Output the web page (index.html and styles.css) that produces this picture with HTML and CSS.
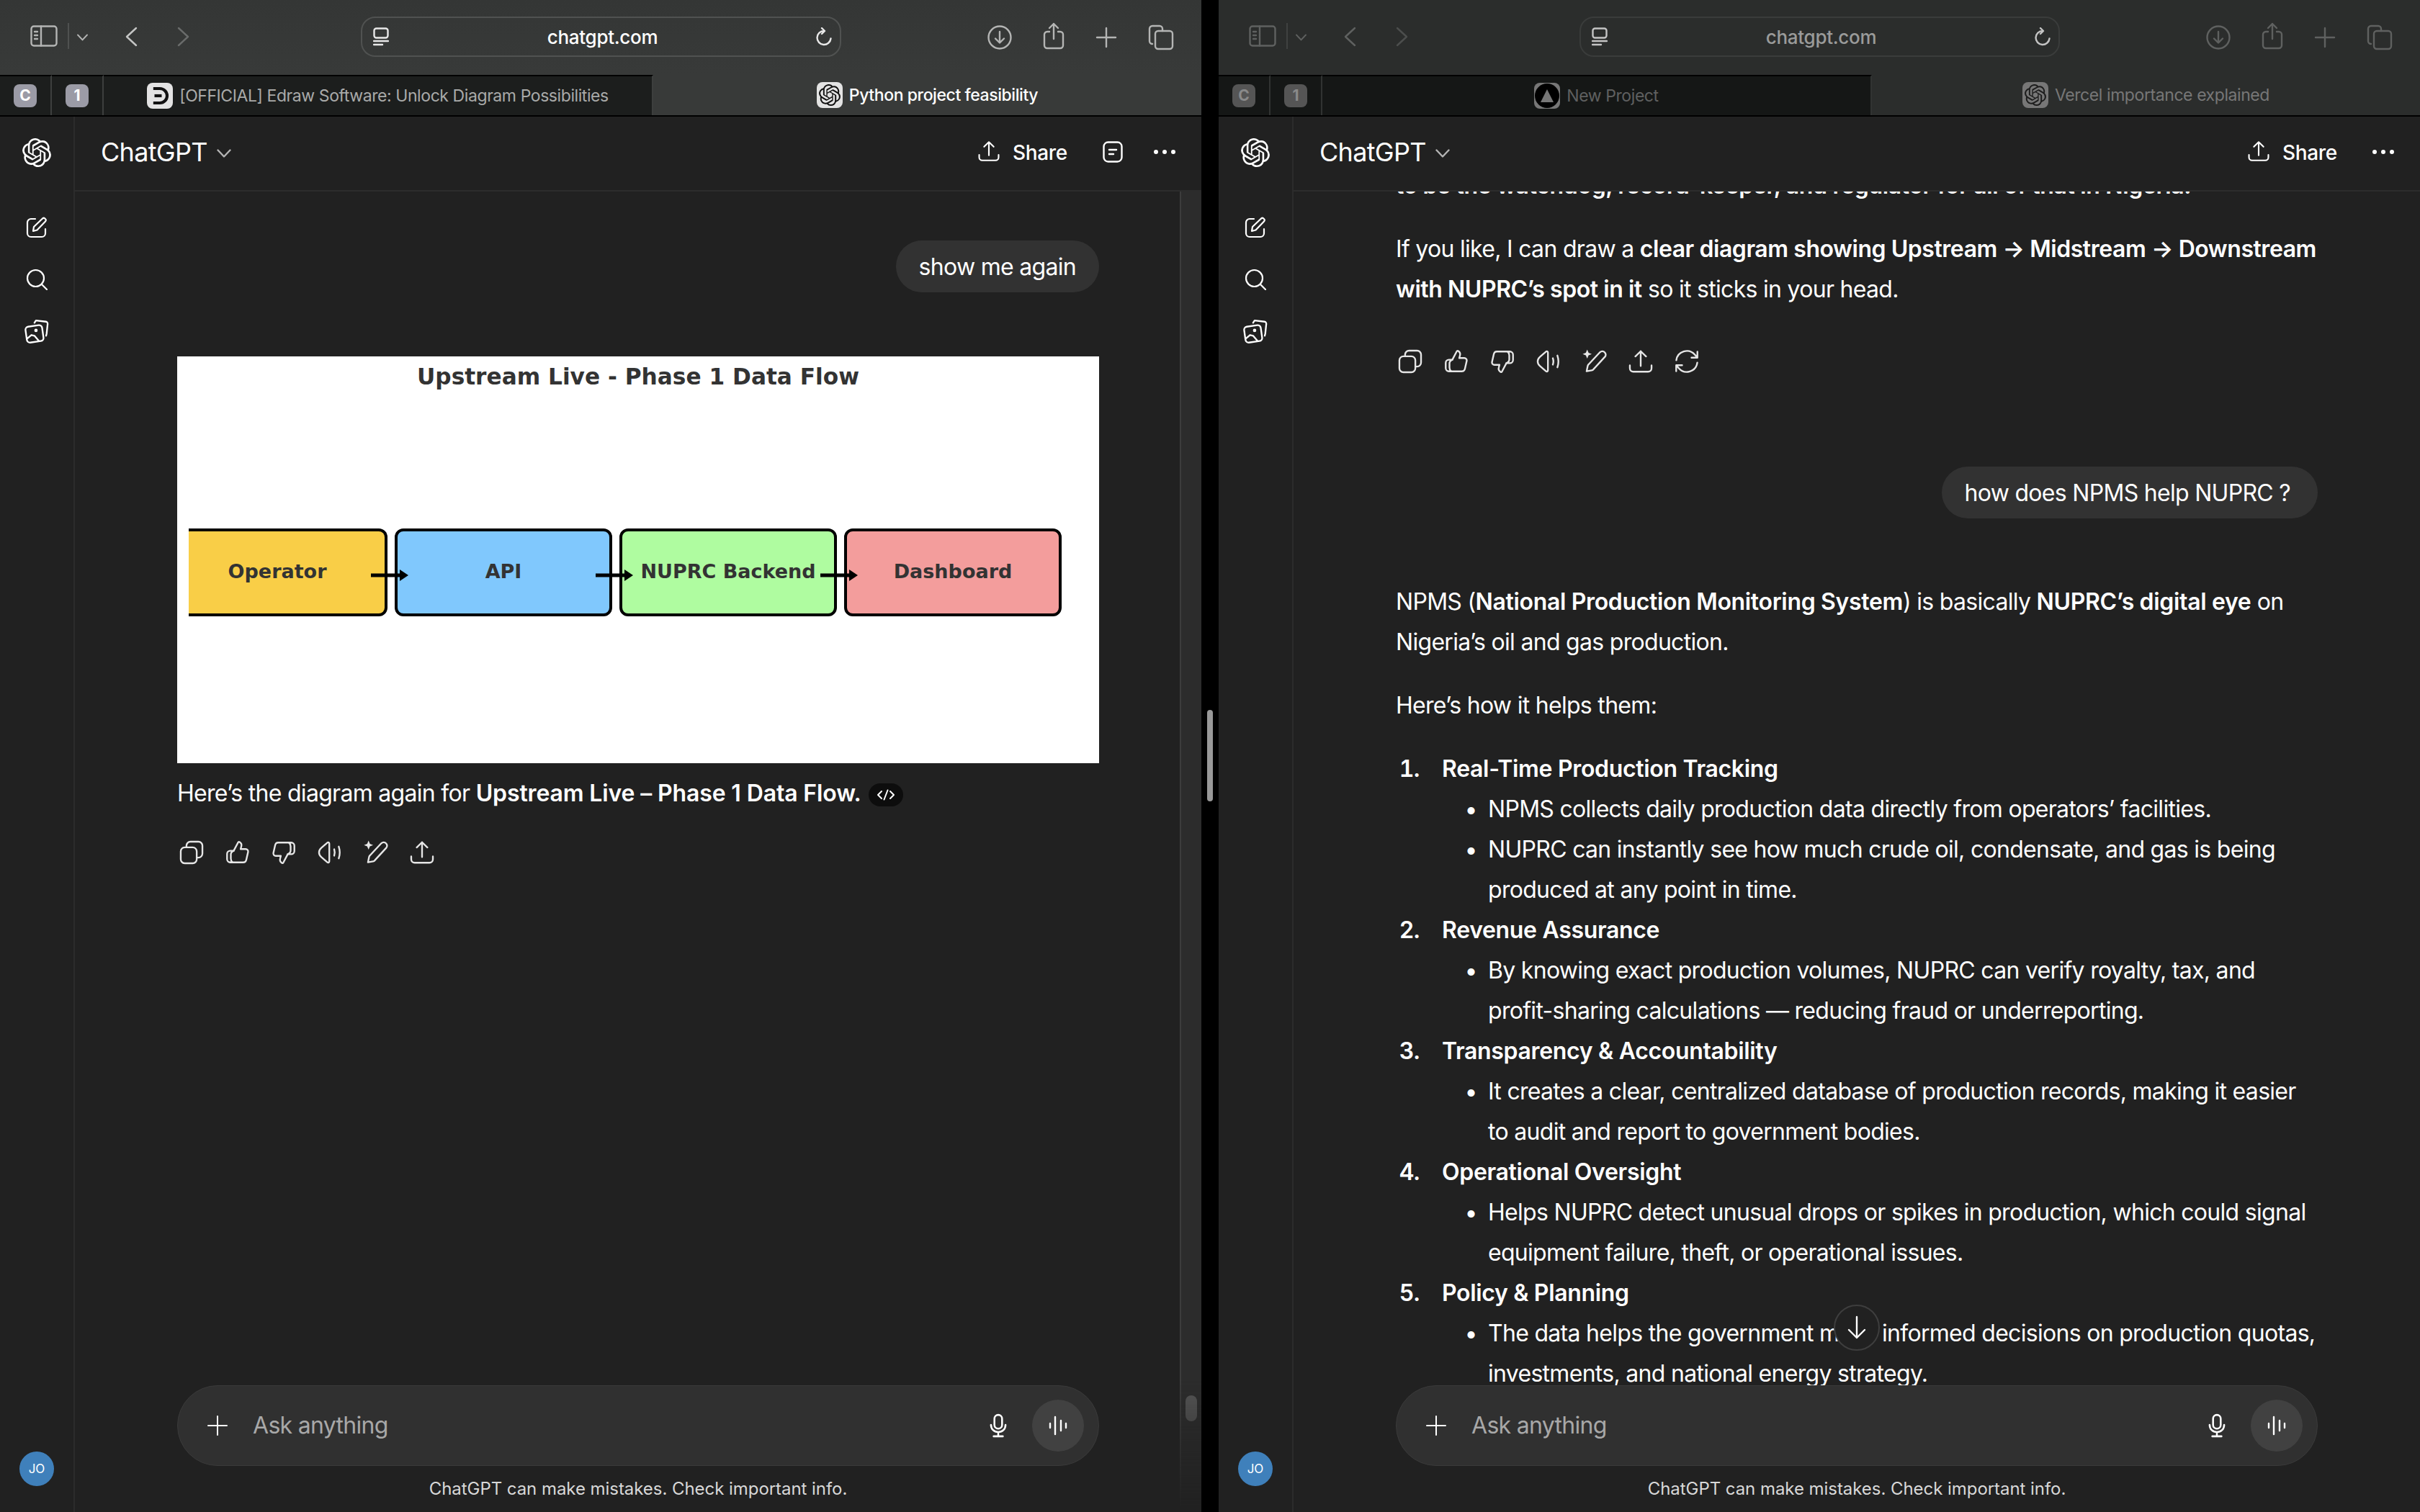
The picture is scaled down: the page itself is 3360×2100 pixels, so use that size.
FILE: index.html
```html
<!DOCTYPE html>
<html lang="en">
<head>
    <meta charset="UTF-8">
    <title>ChatGPT split view</title>
    <link rel="stylesheet" href="styles.css">
</head>
<body>
    <svg class="sprite" xmlns="http://www.w3.org/2000/svg">
        <symbol id="i-logo" viewBox="0 0 24 24"><path fill="currentColor" stroke="none" d="M22.2819 9.8211a5.9847 5.9847 0 0 0-.5157-4.9108 6.0462 6.0462 0 0 0-6.5098-2.9A6.0651 6.0651 0 0 0 4.9807 4.1818a5.9847 5.9847 0 0 0-3.9977 2.9 6.0462 6.0462 0 0 0 .7427 7.0966 5.98 5.98 0 0 0 .511 4.9107 6.051 6.051 0 0 0 6.5146 2.9001A5.9847 5.9847 0 0 0 13.2599 24a6.0557 6.0557 0 0 0 5.7718-4.2058 5.9894 5.9894 0 0 0 3.9977-2.9001 6.0557 6.0557 0 0 0-.7475-7.0729zm-9.022 12.6081a4.4755 4.4755 0 0 1-2.8764-1.0408l.1419-.0804 4.7783-2.7582a.7948.7948 0 0 0 .3927-.6813v-6.7369l2.02 1.1686a.071.071 0 0 1 .038.052v5.5826a4.504 4.504 0 0 1-4.4945 4.4944zm-9.6607-4.1254a4.4708 4.4708 0 0 1-.5346-3.0137l.142.0852 4.783 2.7582a.7712.7712 0 0 0 .7806 0l5.8428-3.3685v2.3324a.0804.0804 0 0 1-.0332.0615L9.74 19.9502a4.4992 4.4992 0 0 1-6.1408-1.6464zM2.3408 7.8956a4.485 4.485 0 0 1 2.3655-1.9728V11.6a.7664.7664 0 0 0 .3879.6765l5.8144 3.3543-2.0201 1.1685a.0757.0757 0 0 1-.071 0l-4.8303-2.7865A4.504 4.504 0 0 1 2.3408 7.872zm16.5963 3.8558L13.1038 8.364 15.1192 7.2a.0757.0757 0 0 1 .071 0l4.8303 2.7913a4.4944 4.4944 0 0 1-.6765 8.1042v-5.6772a.79.79 0 0 0-.407-.667zm2.0107-3.0231l-.142-.0852-4.7735-2.7818a.7759.7759 0 0 0-.7854 0L9.409 9.2297V6.8974a.0662.0662 0 0 1 .0284-.0615l4.8303-2.7866a4.4992 4.4992 0 0 1 6.6802 4.66zM8.3065 12.863l-2.02-1.1638a.0804.0804 0 0 1-.038-.0567V6.0742a4.4992 4.4992 0 0 1 7.3757-3.4537l-.142.0805L8.704 5.459a.7948.7948 0 0 0-.3927.6813zm1.0976-2.3654l2.602-1.4998 2.6069 1.4998v2.9994l-2.5974 1.4997-2.6067-1.4997Z"/></symbol>
        <symbol id="i-copy" viewBox="0 0 24 24"><rect x="2.500" y="7.500" width="14" height="14" rx="3.500"/><path d="M7.500 7.500V6A3.500 3.500 0 0 1 11 2.500h7A3.500 3.500 0 0 1 21.500 6v7a3.500 3.500 0 0 1-3.500 3.500h-1.500"/></symbol>
        <symbol id="i-up" viewBox="0 0 24 24"><path d="M8.500 10.500 12.300 3.300c.3-.5.9-.7 1.400-.4 1.300.8 1.900 2.300 1.500 3.700L14.600 9H19c1.400 0 2.400 1.300 2.100 2.600l-1.600 7c-.3 1.200-1.400 2.100-2.600 2.100H6"/><path d="M8.500 10.500H5.500A2.800 2.800 0 0 0 2.700 13.300v4.600a2.800 2.800 0 0 0 2.800 2.800H7.500c-1-.8-1.500-2-1.500-3.400v-3.600c0-1.500 1-2.600 2.500-3.200Z"/></symbol>
        <symbol id="i-down" viewBox="0 0 24 24"><g transform="rotate(180 12 12)"><use href="#i-up"/></g></symbol>
        <symbol id="i-speak" viewBox="0 0 24 24"><path d="M11.500 4.200c0-1-1-1.400-1.700-.8L4.500 8c-.8.700-2 1.600-2 4s1.200 3.300 2 4l5.300 4.600c.7.600 1.700.2 1.700-.8Z"/><path d="M15.800 9.200c.6 1.800.6 3.800 0 5.600M19.800 6.800c1.100 3.300 1.100 7.100 0 10.400"/></symbol>
        <symbol id="i-magic" viewBox="0 0 24 24"><path d="M20.800 4a2.800 2.800 0 0 0-4-.2L6.800 14.500c-.5.500-.7 1-.9 1.600L5 20.600l4.400-.8c.6-.1 1.200-.4 1.600-.9L21 8a2.800 2.800 0 0 0-.2-4Z"/><path fill="currentColor" stroke="none" d="M5.500 1.500 6.700 4.400 9.500 5.500 6.700 6.700 5.500 9.500 4.300 6.700 1.500 5.500 4.300 4.400Z"/></symbol>
        <symbol id="i-share" viewBox="0 0 24 24"><path d="M12 16V3M7.300 7.600 12 3l4.700 4.600M2.500 15.500v2.500a3 3 0 0 0 3 3h13a3 3 0 0 0 3-3v-2.500"/></symbol>
        <symbol id="i-redo" viewBox="0 0 24 24"><path d="M2.800 11a9.300 9.300 0 0 1 16.200-5l2.200 2.500M21.300 3.500v5.200h-5.200M21.200 13a9.300 9.300 0 0 1-16.200 5l-2.200-2.500M2.700 20.500v-5.200h5.200"/></symbol>
        <symbol id="i-edit" viewBox="0 0 30 30"><path d="M13 3H7a5 5 0 0 0-5 5v15a5 5 0 0 0 5 5h15a5 5 0 0 0 5-5v-6"/><path d="M10 20l1-6L22.500 3a2.800 2.800 0 0 1 4.500 3.500L15.500 18.500Z"/></symbol>
        <symbol id="i-search" viewBox="0 0 30 30"><circle cx="13.500" cy="13.500" r="11.500"/><path d="M22 22l7 7"/></symbol>
        <symbol id="i-library" viewBox="0 0 34 34"><path d="M14 6l2-3 13 1.500c1.500.2 2.500 1.500 2.300 3L30 20l-.7 3"/><rect x="3" y="10" width="22" height="21" rx="4" transform="rotate(-8 14 20)"/><circle cx="16" cy="16" r="2.200" fill="currentColor" stroke="none"/><path d="M4 27l6-5 4 1 6 7"/></symbol>
        <symbol id="i-notes" viewBox="0 0 28 30"><rect x="1.500" y="1.500" width="25" height="27" rx="6"/><path d="M9 12h10M9 18h6"/></symbol>
        <symbol id="i-mic" viewBox="0 0 24 32"><rect x="7" y="2" width="10" height="18" rx="5"/><path d="M2.500 15c0 5.500 4 9.500 9.500 9.500s9.500-4 9.500-9.500M12 24.500V30M6 30h12"/></symbol>
        <symbol id="i-voice" viewBox="0 0 28 32"><path d="M3 13v6M10 4v24M18 9v14M25 13v6"/></symbol>
        <symbol id="i-plus" viewBox="0 0 30 30"><path d="M15 2v26M2 15h26"/></symbol>
        <symbol id="i-arrow" viewBox="0 0 30 34"><path d="M15 2v29M4 20l11 11 11-11"/></symbol>
        <symbol id="i-chev" viewBox="0 0 20 12"><path d="M1.500 1.500 10 10.500l8.500-9"/></symbol>
        <symbol id="i-sidebar" viewBox="0 0 38 30"><rect x="1.500" y="1.500" width="35" height="27" rx="3.500"/><path d="M15 1.500v27M6 9h4M6 14h4M6 19h4"/></symbol>
        <symbol id="i-back" viewBox="0 0 18 28"><path d="M16 2 3 14l13 12"/></symbol>
        <symbol id="i-fwd" viewBox="0 0 18 28"><path d="M2 2l13 12L2 26"/></symbol>
        <symbol id="i-site" viewBox="0 0 22 26"><rect x="1.500" y="1.500" width="19" height="13" rx="3"/><path d="M1 19h20M1 24h12"/></symbol>
        <symbol id="i-reload" viewBox="0 0 22 26"><path d="M11 5a9.500 9.500 0 1 0 9.500 10.500M8 1l4 4-4 4"/></symbol>
        <symbol id="i-download" viewBox="0 0 34 34"><circle cx="17" cy="17" r="15.500"/><path d="M17 9v15M11 18.500l6 6 6-6"/></symbol>
        <symbol id="i-safshare" viewBox="0 0 30 38"><path d="M9 13H6a4 4 0 0 0-4 4v15a4 4 0 0 0 4 4h18a4 4 0 0 0 4-4V17a4 4 0 0 0-4-4h-3M15 23V2M9 8l6-6 6 6"/></symbol>
        <symbol id="i-tabs" viewBox="0 0 36 36"><path d="M6 27a4 4 0 0 1-4-4V6a4 4 0 0 1 4-4h10a4 4 0 0 1 4 4v3"/><rect x="10" y="9" width="24" height="25" rx="4"/></symbol>
        <symbol id="i-code" viewBox="0 0 28 16"><path d="M8 3 3 8l5 5M20 3l5 5-5 5M16.500 1.500l-5 13"/></symbol>
    </svg>

    <div class="split">
        <!-- left window -->
        <section class="win">
            <div class="toolbar">
                <svg class="tb-side ic"><use href="#i-sidebar"/></svg>
                <span class="tb-sep"></span>
                <svg class="tb-chev ic"><use href="#i-chev"/></svg>
                <svg class="tb-back ic"><use href="#i-back"/></svg>
                <svg class="tb-fwd ic"><use href="#i-fwd"/></svg>
                <div class="address">
                    <svg class="addr-site ic"><use href="#i-site"/></svg>
                    <span class="addr-text">chatgpt.com</span>
                    <svg class="addr-reload ic"><use href="#i-reload"/></svg>
                </div>
                <div class="tb-right">
                    <svg class="tb-dl ic"><use href="#i-download"/></svg>
                    <svg class="tb-share ic"><use href="#i-safshare"/></svg>
                    <svg class="tb-plus ic"><use href="#i-plus"/></svg>
                    <svg class="tb-tabs ic"><use href="#i-tabs"/></svg>
                </div>
            </div>
            <div class="tabbar">
                <div class="pinned"><span class="pin-badge">C</span></div>
                <div class="pinned"><span class="pin-badge">1</span></div>
                <div class="tab tab-back">
                    <span class="favicon">
                        <svg viewBox="0 0 36 36" class="fav-glyph"><path d="M7 6h11a12 12 0 0 1 0 24H7" fill="none" stroke="#111" stroke-width="5"/><path d="M9 18h12" stroke="#111" stroke-width="5"/></svg>
                    </span>
                    <span class="tab-title">[OFFICIAL] Edraw Software: Unlock Diagram Possibilities</span>
                </div>
                <div class="tab tab-front">
                    <span class="favicon"><svg class="fav-logo"><use href="#i-logo"/></svg></span>
                    <span class="tab-title">Python project feasibility</span>
                </div>
            </div>
            <div class="app">
                <aside class="rail">
                    <svg class="rail-logo"><use href="#i-logo"/></svg>
                    <svg class="rail-ic ic"><use href="#i-edit"/></svg>
                    <svg class="rail-ic ic"><use href="#i-search"/></svg>
                    <svg class="rail-ic rail-lib ic"><use href="#i-library"/></svg>
                    <span class="avatar">JO</span>
                </aside>
                <main class="main">
                    <header class="head">
                        <span class="head-title">ChatGPT</span>
                        <svg class="head-chev ic"><use href="#i-chev"/></svg>
                        <span class="head-share"><svg class="ic"><use href="#i-share"/></svg>Share</span>
                        <svg class="head-notes ic"><use href="#i-notes"/></svg>
                        <span class="head-dots"><i></i><i></i><i></i></span>
                    </header>
                    <div class="scroll">
                        <div class="thread thread-top">
                            <div class="bubble">show me again</div>
                            <div class="diagram">
                                <div class="diagram-title">Upstream Live - Phase 1 Data Flow</div>
                                <div class="flow">
                                    <div class="node node-op">Operator<svg class="flow-arrow" viewBox="0 0 52 24"><path d="M0 12h42" stroke="#000" stroke-width="5"/><path d="M40 4l12 8-12 8z" fill="#000"/></svg></div>
                                    <div class="node node-api">API<svg class="flow-arrow" viewBox="0 0 52 24"><path d="M0 12h42" stroke="#000" stroke-width="5"/><path d="M40 4l12 8-12 8z" fill="#000"/></svg></div>
                                    <div class="node node-back">NUPRC Backend<svg class="flow-arrow" viewBox="0 0 52 24"><path d="M0 12h42" stroke="#000" stroke-width="5"/><path d="M40 4l12 8-12 8z" fill="#000"/></svg></div>
                                    <div class="node node-dash">Dashboard</div>
                                </div>
                            </div>
                            <p class="after-img">Here’s the diagram again for <b>Upstream Live – Phase 1 Data Flow.</b><span class="code-chip"><svg class="ic"><use href="#i-code"/></svg></span></p>
                            <div class="actions">
                                <svg class="ic"><use href="#i-copy"/></svg>
                                <svg class="ic"><use href="#i-up"/></svg>
                                <svg class="ic"><use href="#i-down"/></svg>
                                <svg class="ic"><use href="#i-speak"/></svg>
                                <svg class="ic"><use href="#i-magic"/></svg>
                                <svg class="ic"><use href="#i-share"/></svg>
                            </div>
                        </div>
                    </div>
                    <div class="scrollbar"><span class="scroll-thumb"></span></div>
                    <div class="composer">
                        <svg class="comp-plus ic"><use href="#i-plus"/></svg>
                        <span class="comp-hint">Ask anything</span>
                        <svg class="comp-mic ic"><use href="#i-mic"/></svg>
                        <span class="comp-voice"><svg class="ic"><use href="#i-voice"/></svg></span>
                    </div>
                    <div class="disclaimer">ChatGPT can make mistakes. Check important info.</div>
                </main>
            </div>
        </section>

        <span class="split-handle"></span>

        <!-- right window, not focused -->
        <section class="win win-dim">
            <div class="toolbar">
                <svg class="tb-side ic"><use href="#i-sidebar"/></svg>
                <span class="tb-sep"></span>
                <svg class="tb-chev ic"><use href="#i-chev"/></svg>
                <svg class="tb-back ic"><use href="#i-back"/></svg>
                <svg class="tb-fwd ic"><use href="#i-fwd"/></svg>
                <div class="address">
                    <svg class="addr-site ic"><use href="#i-site"/></svg>
                    <span class="addr-text">chatgpt.com</span>
                    <svg class="addr-reload ic"><use href="#i-reload"/></svg>
                </div>
                <div class="tb-right">
                    <svg class="tb-dl ic"><use href="#i-download"/></svg>
                    <svg class="tb-share ic"><use href="#i-safshare"/></svg>
                    <svg class="tb-plus ic"><use href="#i-plus"/></svg>
                    <svg class="tb-tabs ic"><use href="#i-tabs"/></svg>
                </div>
            </div>
            <div class="tabbar">
                <div class="pinned"><span class="pin-badge">C</span></div>
                <div class="pinned"><span class="pin-badge">1</span></div>
                <div class="tab tab-back">
                    <span class="favicon">
                        <svg viewBox="0 0 36 36" class="fav-glyph"><circle cx="18" cy="18" r="17" fill="#000"/><path d="M18 9l9 18H9z" fill="#777"/></svg>
                    </span>
                    <span class="tab-title">New Project</span>
                </div>
                <div class="tab tab-front">
                    <span class="favicon"><svg class="fav-logo"><use href="#i-logo"/></svg></span>
                    <span class="tab-title">Vercel importance explained</span>
                </div>
            </div>
            <div class="app">
                <aside class="rail">
                    <svg class="rail-logo"><use href="#i-logo"/></svg>
                    <svg class="rail-ic ic"><use href="#i-edit"/></svg>
                    <svg class="rail-ic ic"><use href="#i-search"/></svg>
                    <svg class="rail-ic rail-lib ic"><use href="#i-library"/></svg>
                    <span class="avatar">JO</span>
                </aside>
                <main class="main">
                    <header class="head">
                        <span class="head-title">ChatGPT</span>
                        <svg class="head-chev ic"><use href="#i-chev"/></svg>
                        <span class="head-share"><svg class="ic"><use href="#i-share"/></svg>Share</span>
                        <span class="head-dots"><i></i><i></i><i></i></span>
                    </header>
                    <div class="scroll">
                        <div class="thread thread-scrolled">
                            <p><b>to be the watchdog, record-keeper, and regulator for all of that in Nigeria.</b></p>
                            <p>If you like, I can draw a <b>clear diagram showing Upstream → Midstream → Downstream with NUPRC’s spot in it</b> so it sticks in your head.</p>
                            <div class="actions">
                                <svg class="ic"><use href="#i-copy"/></svg>
                                <svg class="ic"><use href="#i-up"/></svg>
                                <svg class="ic"><use href="#i-down"/></svg>
                                <svg class="ic"><use href="#i-speak"/></svg>
                                <svg class="ic"><use href="#i-magic"/></svg>
                                <svg class="ic"><use href="#i-share"/></svg>
                                <svg class="ic"><use href="#i-redo"/></svg>
                            </div>
                            <div class="bubble bubble-late">how does NPMS help NUPRC ?</div>
                            <p class="answer-start">NPMS (<b>National Production Monitoring System</b>) is basically <b>NUPRC’s digital eye</b> on Nigeria’s oil and gas production.</p>
                            <p>Here’s how it helps them:</p>
                            <ol class="points">
                                <li><b>Real-Time Production Tracking</b>
                                    <ul>
                                        <li>NPMS collects daily production data directly from operators’ facilities.</li>
                                        <li>NUPRC can instantly see how much crude oil, condensate, and gas is being produced at any point in time.</li>
                                    </ul>
                                </li>
                                <li><b>Revenue Assurance</b>
                                    <ul>
                                        <li>By knowing exact production volumes, NUPRC can verify royalty, tax, and profit-sharing calculations — reducing fraud or underreporting.</li>
                                    </ul>
                                </li>
                                <li><b>Transparency &amp; Accountability</b>
                                    <ul>
                                        <li>It creates a clear, centralized database of production records, making it easier to audit and report to government bodies.</li>
                                    </ul>
                                </li>
                                <li><b>Operational Oversight</b>
                                    <ul>
                                        <li>Helps NUPRC detect unusual drops or spikes in production, which could signal equipment failure, theft, or operational issues.</li>
                                    </ul>
                                </li>
                                <li><b>Policy &amp; Planning</b>
                                    <ul>
                                        <li>The data helps the government make informed decisions on production quotas, investments, and national energy strategy.</li>
                                    </ul>
                                </li>
                            </ol>
                        </div>
                        <span class="to-bottom"><svg class="ic"><use href="#i-arrow"/></svg></span>
                    </div>
                    <div class="composer">
                        <svg class="comp-plus ic"><use href="#i-plus"/></svg>
                        <span class="comp-hint">Ask anything</span>
                        <svg class="comp-mic ic"><use href="#i-mic"/></svg>
                        <span class="comp-voice"><svg class="ic"><use href="#i-voice"/></svg></span>
                    </div>
                    <div class="disclaimer">ChatGPT can make mistakes. Check important info.</div>
                </main>
            </div>
        </section>
    </div>
</body>
</html>
```

FILE: styles.css
```css
* {
    box-sizing: border-box;
}
html, body {
    margin: 0;
    height: 100%;
    background: #000;
    overflow: hidden;
}
body {
    font-family: Inter, "Liberation Sans", sans-serif;
    font-size: 32px;
    line-height: 56px;
    letter-spacing: -0.7px;
    color: #fff;
}
.sprite {
    display: none;
}
.ic {
    fill: none;
    stroke: currentColor;
    stroke-width: 2.4;
    stroke-linecap: round;
    stroke-linejoin: round;
    display: block;
    flex: none;
}

.split {
    position: relative;
    display: flex;
    gap: 24px;
    height: 2100px;
}
.split-handle {
    position: absolute;
    left: 1676px;
    top: 986px;
    width: 8px;
    height: 127px;
    border-radius: 4px;
    background: #999;
}
.win {
    flex: 1;
    min-width: 0;
    display: flex;
    flex-direction: column;
    background: #212121;
}

/* browser toolbar */
.toolbar {
    display: flex;
    align-items: center;
    height: 104px;
    padding: 0 38px 0 42px;
    background: linear-gradient(#343635, #383a39);
    color: #b4b5b4;
}
.win-dim .toolbar {
    background: #2b2d2c;
    color: #5f6160;
}
.tb-side {
    width: 38px;
    height: 30px;
    margin-top: -4px;
}
.tb-sep {
    width: 2px;
    height: 36px;
    margin: -4px 0 0 14px;
    background: #4f5150;
}
.win-dim .tb-sep {
    background: #3f4140;
}
.tb-chev {
    width: 15px;
    height: 10px;
    margin-left: 11px;
    stroke-width: 2.8;
}
.tb-back {
    width: 18px;
    height: 28px;
    margin-left: 51px;
    margin-top: -2px;
    color: #c4c5c4;
}
.tb-fwd {
    width: 18px;
    height: 28px;
    margin-left: 55px;
    margin-top: -2px;
    color: #6a6c6b;
}
.win-dim .tb-back {
    color: #5f6160;
}
.win-dim .tb-fwd {
    color: #4c4e4d;
}
.address {
    display: flex;
    align-items: center;
    justify-content: space-between;
    width: 667px;
    height: 56px;
    margin: -2px 0 0 237px;
    padding: 0 11px 0 15px;
    border: 2px solid #505251;
    border-radius: 20px;
}
.win-dim .address {
    border-color: #3a3c3b;
}
.addr-site {
    width: 22px;
    height: 26px;
    color: #e8e8e8;
}
.addr-reload {
    width: 22px;
    height: 26px;
    color: #e8e8e8;
}
.win-dim .addr-site, .win-dim .addr-reload {
    color: #c4c4c4;
}
.addr-text {
    font-size: 26px;
    line-height: 40px;
    font-weight: 500;
    letter-spacing: -0.3px;
    color: #fff;
    padding-top: 1px;
}
.win-dim .addr-text {
    color: #9a9b9a;
}
.tb-right {
    display: flex;
    align-items: center;
    gap: 43px;
    margin-left: auto;
}
.tb-dl {
    width: 34px;
    height: 34px;
}
.tb-share {
    width: 30px;
    height: 38px;
    margin-top: -4px;
}
.tb-plus {
    width: 30px;
    height: 30px;
}
.tb-tabs {
    width: 36px;
    height: 36px;
}

/* tab strip */
.tabbar {
    display: flex;
    height: 58px;
    border-bottom: 2px solid #000;
    background: #383a39;
    font-size: 23px;
    line-height: 36px;
    letter-spacing: -0.42px;
}
.win-dim .tabbar {
    background: #2b2d2c;
}
.pinned {
    display: flex;
    align-items: center;
    justify-content: center;
    width: 72px;
    background: #1c1e1d;
    border-top: 2px solid #000;
    border-right: 2px solid #3d3f3e;
}
.win-dim .pinned {
    background: #151716;
    border-right-color: #313332;
}
.pin-badge {
    display: flex;
    align-items: center;
    justify-content: center;
    width: 32px;
    height: 32px;
    border-radius: 8px;
    background: #9b9ba6;
    font-size: 21px;
    font-weight: 700;
    letter-spacing: 0;
}
.win-dim .pin-badge {
    background: #555;
    color: #8a8a8a;
}
.tab {
    display: flex;
    align-items: center;
    justify-content: center;
    gap: 9px;
}
.tab-back {
    width: 763px;
    background: #1c1e1d;
    border-top: 2px solid #000;
    border-right: 2px solid #3d3f3e;
    color: #a9aaa9;
}
.win-dim .tab-back {
    background: #151716;
    border-right-color: #313332;
    color: #5f6060;
}
.tab-front {
    flex: 1;
    font-weight: 500;
}
.win-dim .tab-front {
    font-weight: 400;
    color: #777;
}
.favicon {
    display: flex;
    align-items: center;
    justify-content: center;
    width: 36px;
    height: 36px;
    border-radius: 8px;
    background: #e3e3e3;
    color: #111;
}
.win-dim .favicon {
    background: #777;
    color: #1d1d1d;
}
.fav-glyph {
    width: 30px;
    height: 30px;
}
.win-dim .fav-glyph {
    width: 36px;
    height: 36px;
}
.fav-logo {
    width: 30px;
    height: 30px;
}

/* app shell */
.app {
    flex: 1;
    display: flex;
    min-height: 0;
}
.rail {
    display: flex;
    flex-direction: column;
    align-items: center;
    width: 104px;
    padding: 30px 0 36px;
    border-right: 2px solid #2c2c2c;
    color: #fff;
}
.rail-logo {
    width: 40px;
    height: 40px;
    margin-bottom: 69px;
}
.rail-ic {
    width: 30px;
    height: 30px;
    margin-bottom: 42px;
    stroke-width: 2.2;
}
.rail-lib {
    width: 36px;
    height: 36px;
    margin-top: -3px;
}
.avatar {
    display: flex;
    align-items: center;
    justify-content: center;
    width: 48px;
    height: 48px;
    margin-top: auto;
    border-radius: 50%;
    background: #3f80bb;
    font-size: 17px;
    line-height: 20px;
    letter-spacing: 0;
}
.main {
    position: relative;
    flex: 1;
    min-width: 0;
    display: flex;
    flex-direction: column;
}
.head {
    display: flex;
    align-items: center;
    flex: none;
    height: 104px;
    padding: 0 36px 4px 36px;
    border-bottom: 2px solid #2c2c2c;
}
.head-title {
    font-size: 36px;
    letter-spacing: -0.7px;
}
.head-chev {
    width: 20px;
    height: 12px;
    margin: 4px 0 0 13px;
    color: #b4b4b4;
}
.head-share {
    display: flex;
    align-items: center;
    gap: 16px;
    margin-left: auto;
    padding-top: 2px;
    font-size: 28px;
    font-weight: 500;
    letter-spacing: -0.3px;
}
.head-share .ic {
    width: 34px;
    height: 34px;
    margin-top: -4px;
    stroke-width: 1.5;
}
.head-notes {
    width: 28px;
    height: 30px;
    margin-left: 49px;
}
.head-dots {
    display: flex;
    gap: 6px;
    margin-left: 43px;
}
.head-share + .head-dots {
    margin-left: 49px;
}
.head-dots i {
    width: 6px;
    height: 6px;
    border-radius: 50%;
    background: #fff;
}

/* conversation */
.scroll {
    position: relative;
    flex: 1;
    min-height: 0;
    overflow: hidden;
}
.thread {
    width: 1280px;
    margin: 0 auto;
}
.thread-top {
    padding-top: 68px;
}
.thread-scrolled {
    margin-top: -36px;
}
.thread p {
    margin: 0 0 32px;
}
.thread b {
    font-weight: 600;
    letter-spacing: -0.33px;
}
.thread .after-img b {
    letter-spacing: -0.14px;
}
.thread-scrolled p:first-child + p b {
    letter-spacing: -0.45px;
}
.bubble {
    width: fit-content;
    margin-left: auto;
    height: 72px;
    padding: 0 32px;
    border-radius: 36px;
    background: #323232;
    line-height: 73px;
}
.bubble-late {
    margin-top: 126px;
    padding-right: 38px;
}
.thread .answer-start {
    margin-top: 88px;
}
.diagram {
    margin-top: 89px;
    height: 565px;
    padding-top: 9px;
    background: #fff;
    color: #333;
    font-family: "DejaVu Sans", sans-serif;
    font-weight: 700;
    letter-spacing: 0;
    overflow: hidden;
}
.diagram-title {
    font-size: 31.2px;
    line-height: 38px;
    text-align: center;
}
.flow {
    display: flex;
    gap: 10px;
    margin: 192px 0 0 16px;
    font-size: 27px;
    line-height: 52px;
}
.node {
    position: relative;
    display: flex;
    align-items: center;
    justify-content: center;
    width: 302px;
    height: 122px;
    padding-bottom: 3px;
    border: 4px solid #000;
    border-radius: 12px;
}
.node-op {
    width: 276px;
    padding-right: 26px;
    border-left: 0;
    border-radius: 0 12px 12px 0;
    background: #f9ce47;
}
.node-api {
    background: #80c8fd;
}
.node-back {
    background: #affca0;
    white-space: nowrap;
}
.node-dash {
    background: #f39d9c;
}
.flow-arrow {
    position: absolute;
    right: -33px;
    top: 49px;
    width: 52px;
    height: 24px;
    z-index: 1;
}
.thread .after-img {
    margin: 14px 0 0;
}
.code-chip {
    display: inline-flex;
    align-items: center;
    justify-content: center;
    width: 48px;
    height: 32px;
    margin-left: 10px;
    border-radius: 16px;
    background: #0d0d0d;
    vertical-align: 1px;
}
.code-chip .ic {
    width: 28px;
    height: 16px;
    stroke-width: 2;
}
.actions {
    display: flex;
    gap: 26px;
    height: 40px;
    margin-top: 34px;
    padding-left: 1px;
    align-items: center;
    color: #e6e6e6;
}
.actions .ic {
    width: 38px;
    height: 38px;
    stroke-width: 1.5;
}
.thread-scrolled .actions {
    margin-top: 52px;
}
.thread-scrolled p:first-child + p {
    margin-bottom: 0;
}
.points {
    margin: 0;
    padding-left: 64px;
}
.points > li::marker {
    content: counter(list-item) ".\2003";
    font-weight: 600;
}
.points ul {
    margin: 0;
    padding-left: 64px;
}
.points ul li::marker {
    content: "•\2002";
}
.to-bottom {
    position: absolute;
    left: 50%;
    bottom: 48px;
    display: flex;
    align-items: center;
    justify-content: center;
    width: 64px;
    height: 64px;
    margin-left: -32px;
    border: 2px solid #3e3e3e;
    border-radius: 50%;
    background: #212121;
}
.to-bottom .ic {
    width: 30px;
    height: 34px;
}

/* overlay scrollbar of the left pane */
.scrollbar {
    position: absolute;
    top: 104px;
    right: 0;
    bottom: 0;
    width: 30px;
    border-left: 2px solid #3c3c3c;
    background: #2c2c2c;
    -webkit-mask-image: linear-gradient(#000 90%, transparent 100%);
}
.scroll-thumb {
    position: absolute;
    left: 6px;
    top: 1672px;
    width: 16px;
    height: 36px;
    border-radius: 8px;
    background: #555;
}

/* composer */
.composer {
    display: flex;
    align-items: center;
    flex: none;
    width: 1280px;
    height: 112px;
    margin: 0 auto;
    padding: 0 20px 0 40px;
    border: 1px solid #3a3a3a;
    border-radius: 56px;
    background: #303030;
}
.comp-plus {
    width: 30px;
    height: 30px;
    stroke-width: 2;
}
.comp-hint {
    margin-left: 34px;
    color: #a8a8a8;
}
.comp-mic {
    width: 26px;
    height: 34px;
    margin-left: auto;
}
.comp-voice {
    display: flex;
    align-items: center;
    justify-content: center;
    width: 72px;
    height: 72px;
    margin-left: 34px;
    border-radius: 50%;
    background: #414141;
}
.comp-voice .ic {
    width: 28px;
    height: 32px;
}
.disclaimer {
    flex: none;
    height: 64px;
    line-height: 64px;
    font-size: 24px;
    letter-spacing: -0.05px;
    text-align: center;
    color: #d8d8d8;
}
```
